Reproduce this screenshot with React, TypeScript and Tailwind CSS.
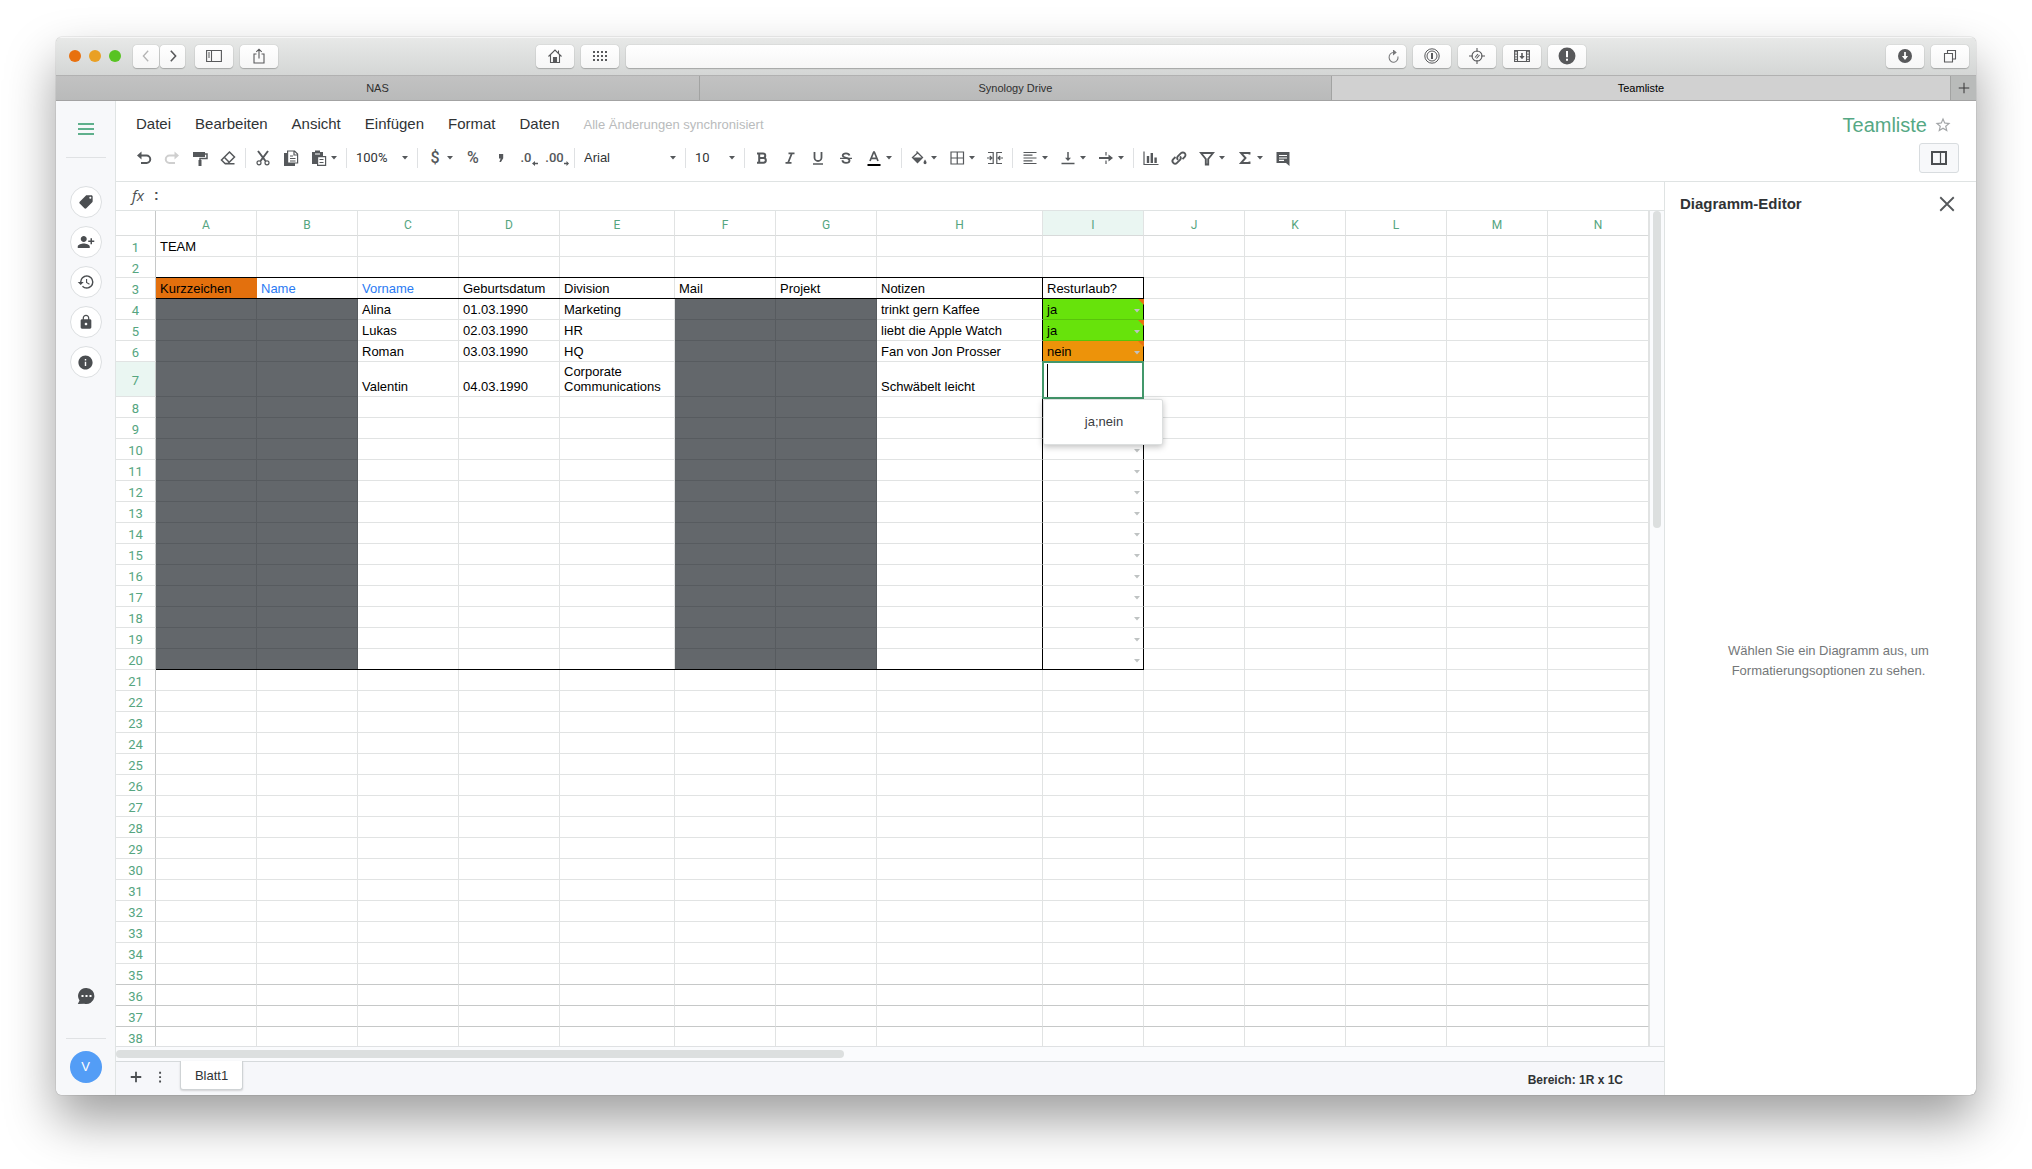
import { ReactNode } from 'react';
import clsx from 'clsx';
import { MdLocalOffer, MdPersonAdd, MdHistory, MdLock, MdInfo, MdStarBorder } from 'react-icons/md';

const columns = [
	{ name: 'A', width: 'w-[101px]' },
	{ name: 'B', width: 'w-[101px]' },
	{ name: 'C', width: 'w-[101px]' },
	{ name: 'D', width: 'w-[101px]' },
	{ name: 'E', width: 'w-[115px]' },
	{ name: 'F', width: 'w-[101px]' },
	{ name: 'G', width: 'w-[101px]' },
	{ name: 'H', width: 'w-[166px]' },
	{ name: 'I', width: 'w-[101px]' },
	{ name: 'J', width: 'w-[101px]' },
	{ name: 'K', width: 'w-[101px]' },
	{ name: 'L', width: 'w-[101px]' },
	{ name: 'M', width: 'w-[101px]' },
	{ name: 'N', width: 'w-[101px]' }
];

const rows = Array.from({ length: 38 }, (_, i) => i + 1);

const values: Record<string, string> = {
	A1: 'TEAM',
	A3: 'Kurzzeichen', B3: 'Name', C3: 'Vorname', D3: 'Geburtsdatum', E3: 'Division',
	F3: 'Mail', G3: 'Projekt', H3: 'Notizen', I3: 'Resturlaub?',
	C4: 'Alina', D4: '01.03.1990', E4: 'Marketing', H4: 'trinkt gern Kaffee', I4: 'ja',
	C5: 'Lukas', D5: '02.03.1990', E5: 'HR', H5: 'liebt die Apple Watch', I5: 'ja',
	C6: 'Roman', D6: '03.03.1990', E6: 'HQ', H6: 'Fan von Jon Prosser', I6: 'nein',
	C7: 'Valentin', D7: '04.03.1990', E7: 'Corporate Communications', H7: 'Schwäbelt leicht'
};

const menus = ['Datei', 'Bearbeiten', 'Ansicht', 'Einfügen', 'Format', 'Daten'];

const tabs = [
	{ name: 'NAS', grow: 'grow-[644]', active: false },
	{ name: 'Synology Drive', grow: 'grow-[632]', active: false },
	{ name: 'Teamliste', grow: 'grow-[619]', active: true }
];

function Icon({ children, size = 16, stroke = 1.5 }: { children: ReactNode; size?: number; stroke?: number }) {
	return (
		<svg width={size} height={size} viewBox="0 0 16 16" fill="none" stroke="currentColor" strokeWidth={stroke} aria-hidden="true" className="shrink-0">
			{children}
		</svg>
	);
}

function Caret() {
	return (
		<svg width="8" height="4" viewBox="0 0 8 4" fill="currentColor" aria-hidden="true" className="shrink-0">
			<path d="M1 0h6L4 3.6z" />
		</svg>
	);
}

function ChromeButton({ label, children }: { label: string; children: ReactNode }) {
	return (
		<button aria-label={label} className="flex h-[23px] w-[38px] shrink-0 items-center justify-center rounded-[4px] bg-linear-to-b from-white to-[#f6f6f6] text-[#58595b] shadow-[0_0_1px_rgba(0,0,0,0.35),0_1px_1px_rgba(0,0,0,0.2)]">
			{children}
		</button>
	);
}

function Tool({ label, children, disabled }: { label: string; children: ReactNode; disabled?: boolean }) {
	return (
		<button aria-label={label} disabled={disabled} className="flex h-7 w-7 shrink-0 items-center justify-center text-[#55585b] disabled:text-[#cfcfcf]">
			{children}
		</button>
	);
}

function MenuTool({ label, children }: { label: string; children: ReactNode }) {
	return (
		<button aria-label={label} className="flex h-7 w-[38px] shrink-0 items-center text-[#55585b]">
			<span className="-mr-[3px] flex w-7 shrink-0 justify-center">{children}</span>
			<Caret />
		</button>
	);
}

function Picker({ label, value, width }: { label: string; value: string; width: string }) {
	return (
		<div className={clsx('relative flex h-7 shrink-0 items-center text-[#55585b]', width)}>
			<select aria-label={label} className="h-full w-full appearance-none bg-transparent pl-1.5 text-[13px] text-[#303335]">
				<option>{value}</option>
			</select>
			<span className="pointer-events-none absolute right-[5px]"><Caret /></span>
		</div>
	);
}

function Separator() {
	return <span className="mx-[3px] h-5 w-px shrink-0 bg-[#dfe1e3]" />;
}

function TitleBar() {
	return (
		<div className="grid h-[39px] shrink-0 grid-cols-[1fr_minmax(0,780px)_1fr] items-center border-b border-[#b1b1b1] bg-linear-to-b from-[#e8e9e8] to-[#d4d6d5] shadow-[inset_0_1px_0_#f6f6f6]">
			<div className="flex items-center pr-[7px] pl-[13px]">
				<div className="flex gap-2">
					<span className="h-3 w-3 rounded-full bg-[#e8700e]" />
					<span className="h-3 w-3 rounded-full bg-[#e9a024]" />
					<span className="h-3 w-3 rounded-full bg-[#58c322]" />
				</div>
				<div className="ml-3 flex gap-px">
					<button aria-label="Zurück" className="flex h-[23px] w-[26px] items-center justify-center rounded-[4px] bg-linear-to-b from-white to-[#f6f6f6] text-[#b4b4b4] shadow-[0_0_1px_rgba(0,0,0,0.35),0_1px_1px_rgba(0,0,0,0.2)]">
						<Icon size={14}><path d="M10.5 2 5 8l5.500 6" /></Icon>
					</button>
					<button aria-label="Vorwärts" className="flex h-[23px] w-[25px] items-center justify-center rounded-[4px] bg-linear-to-b from-white to-[#f6f6f6] text-[#58595b] shadow-[0_0_1px_rgba(0,0,0,0.35),0_1px_1px_rgba(0,0,0,0.2)]">
						<Icon size={14} stroke={1.8}><path d="M5.500 2 11 8l-5.500 6" /></Icon>
					</button>
				</div>
				<div className="ml-[10px] flex gap-[7px]">
					<ChromeButton label="Seitenleiste">
						<Icon stroke={1.1}><path d="M.6 2.500h14.800v11H.6zM5.500 2.500v11M2 5h2M2 7h2M2 9h2" /></Icon>
					</ChromeButton>
					<ChromeButton label="Teilen">
						<Icon stroke={1.1}><path d="M5.500 6H3v9h10V6h-2.500M8 10.500V1.200M5.300 3.800 8 1.200l2.700 2.600" /></Icon>
					</ChromeButton>
				</div>
				<div className="ml-auto flex gap-[7px]">
					<ChromeButton label="Startseite">
						<Icon stroke={1.1}>
							<path d="M1.500 8.500 8 2l6.500 6.500M3.500 7v7.500h9V7M11.500 5V2.500" />
							<path d="M6.500 14V9.500h3V14z" fill="currentColor" />
						</Icon>
					</ChromeButton>
					<ChromeButton label="Favoriten">
						<Icon stroke={2}><path strokeDasharray="2 2" d="M1 4h14M1 8h14M1 12h14" /></Icon>
					</ChromeButton>
				</div>
			</div>
			<div className="flex h-[23px] items-center rounded-[4px] bg-linear-to-b from-white to-[#f6f6f6] pr-[6px] text-[#77787a] shadow-[0_0_1px_rgba(0,0,0,0.35),0_1px_1px_rgba(0,0,0,0.2)]">
				<input aria-label="Adresse" className="h-full min-w-0 flex-1 bg-transparent px-2 text-xs outline-none" />
				<Icon size={13} stroke={1.3}><path d="M13.500 8A5.500 6 0 1 1 8 3h1.500" /><path d="M8 .5 11 3 8 5.500z" fill="currentColor" /></Icon>
			</div>
			<div className="flex items-center gap-[7px] pr-[7px] pl-[7px]">
				<ChromeButton label="1Password">
					<Icon stroke={1}><circle cx="8" cy="8" r="7.200" /><circle cx="8" cy="8" r="5" /><path strokeWidth="2" d="M8 5v6" /></Icon>
				</ChromeButton>
				<ChromeButton label="Blocker">
					<Icon stroke={1.1}><circle cx="8" cy="8" r="5" /><path d="M8 0v4M8 12v4M0 8h4M12 8h4M6 9.500l3-3.500M7.500 10.500l3-3.500" /></Icon>
				</ChromeButton>
				<ChromeButton label="Video laden">
					<Icon stroke={1.1}><path d="M.6 2.500h14.800v11H.6zM3.500 2.500v11M12.500 2.500v11" /><path strokeWidth="1.600" d="M8 5v4" /><path fill="currentColor" stroke="none" d="M5.300 8h5.400L8 11.200z" /><path strokeWidth="1.600" strokeDasharray="1.200 1.400" d="M2 3v10M14 3v10" /></Icon>
				</ChromeButton>
				<ChromeButton label="Hinweis">
					<Icon size={18}><circle cx="8" cy="8" r="7.500" fill="currentColor" stroke="none" /><path stroke="#fff" strokeWidth="1.800" d="M8 3.500v5.500M8 10.500v1.800" /></Icon>
				</ChromeButton>
				<div className="ml-auto flex gap-[7px]">
					<ChromeButton label="Downloads">
						<Icon size={14}><circle cx="8" cy="8" r="8" fill="currentColor" stroke="none" /><path stroke="#fff" strokeWidth="2" d="M8 3.500v7" /><path fill="#fff" stroke="none" d="M4.500 8h7L8 12.500z" /></Icon>
					</ChromeButton>
					<ChromeButton label="Alle Tabs">
						<Icon stroke={1.1}><path d="M2.500 5.500h8v8.500h-8zM5.500 5.500v-3h8V11h-3" /></Icon>
					</ChromeButton>
				</div>
			</div>
		</div>
	);
}

function TabBar() {
	return (
		<div className="flex h-[25px] shrink-0 border-b border-[#a3a3a3] text-[11px]">
			{tabs.map((tab) => (
				<button
					key={tab.name}
					className={clsx(
						'basis-0 border-r border-[#a2a3a2]',
						tab.grow,
						tab.active ? 'bg-[#d1d1d1] text-black' : 'bg-linear-to-b from-[#c2c2c2] to-[#b9baba] text-[#2f2f2f]'
					)}
				>
					{tab.name}
				</button>
			))}
			<button aria-label="Neuer Tab" className="flex w-[25px] items-center justify-center bg-[#b9bbba] text-[#3b3b3b]">
				<Icon size={12} stroke={1.4}><path d="M8 1v14M1 8h14" /></Icon>
			</button>
		</div>
	);
}

function Sidebar() {
	const items = [
		{ label: 'Etiketten', icon: <MdLocalOffer size={16} className="-scale-x-100" /> },
		{ label: 'Freigeben', icon: <MdPersonAdd size={18} className="-scale-x-100" /> },
		{ label: 'Versionen', icon: <MdHistory size={18} /> },
		{ label: 'Schützen', icon: <MdLock size={16} /> },
		{ label: 'Info', icon: <MdInfo size={17} /> }
	];

	return (
		<nav className="flex w-[60px] shrink-0 flex-col items-center border-r border-[#e0e4e4] bg-[#f7f8fa] pb-3 text-[#4b4e51]">
			<button aria-label="Menü" className="mt-[18px] flex h-5 w-5 items-center justify-center text-[#5fb08c]">
				<Icon stroke={2}><path d="M0 3h16M0 8h16M0 13h16" /></Icon>
			</button>
			<div className="mt-[18px] h-px w-10 bg-[#e0e2e4]" />
			<div className="mt-7 flex flex-col gap-2">
				{items.map((item) => (
					<button key={item.label} aria-label={item.label} className="flex h-8 w-8 items-center justify-center rounded-full border border-[#dcdfe1] bg-white">
						{item.icon}
					</button>
				))}
			</div>
			<button aria-label="Chat" className="mt-auto flex h-5 w-5 items-center justify-center">
				<svg width="18" height="18" viewBox="0 0 18 18" aria-hidden="true">
					<path fill="currentColor" d="M9.500 1a8 8 0 1 1-2.300 15.700L.8 17l1.700-3.500A8 8 0 0 1 9.500 1z" />
					<path fill="#fff" d="M4.500 8h2v2h-2zM8.500 8h2v2h-2zM12.500 8h2v2h-2z" />
				</svg>
			</button>
			<div className="mt-8 h-px w-10 bg-[#e0e2e4]" />
			<button aria-label="Konto" className="mt-3 h-8 w-8 rounded-full bg-[#539df6] text-[13px] text-white">V</button>
		</nav>
	);
}

function Toolbar() {
	return (
		<div className="flex h-8 items-center">
			<Tool label="Rückgängig"><Icon stroke={2}><path d="M3 5.500h7.500a3.500 3.500 0 0 1 0 7.500H5" /><path stroke="none" fill="currentColor" d="M1 5.500 5.500 1.500v8z" /></Icon></Tool>
			<Tool label="Wiederholen" disabled><Icon stroke={2}><path d="M13 5.500H5.500a3.500 3.500 0 0 0 0 7.500H11" /><path stroke="none" fill="currentColor" d="M15 5.500 10.500 1.500v8z" /></Icon></Tool>
			<Tool label="Format übertragen"><Icon><path fill="currentColor" stroke="none" d="M1 2h12v5H1zM6.500 10h3v6h-3z" /><path d="M12 4h3v4.500H8V11" /></Icon></Tool>
			<Tool label="Format löschen"><Icon><path d="M9.500 2 1.500 10l3.500 3.500h3L14.500 7zM5 13.800h9.500" /><path d="M4.500 7.500 9 12" /></Icon></Tool>
			<Separator />
			<Tool label="Ausschneiden"><Icon><path strokeWidth="2" d="M3 1l7.500 10M13 1 5.500 11" /><circle cx="4" cy="12.800" r="2" strokeWidth="1.200" /><circle cx="12" cy="12.800" r="2" strokeWidth="1.200" /></Icon></Tool>
			<Tool label="Kopieren"><Icon stroke={1.2}><path fill="currentColor" stroke="none" d="M1 3h3.500v10H12v3H1z" /><path d="M4.600 1h7l3 3v9h-10zM11 1v4h3.500M7 6h3M7 8.500h5.500M7 11h5.500" /></Icon></Tool>
			<MenuTool label="Einfügen"><Icon stroke={1.2}><path fill="currentColor" stroke="none" d="M1 2h3V.5h5V2h3v4H6v8H1z" /><path d="M6.600 6.600h8v8.800h-8zM8.500 9.500h4M8.500 12.500h4" /><path stroke="#fff" d="M4 4h5" /></Icon></MenuTool>
			<Separator />
			<Picker label="Zoom" value="100%" width="w-16 font-[Roboto]" />
			<Separator />
			<MenuTool label="Währung"><span className="font-[Roboto] text-base font-medium">$</span></MenuTool>
			<Tool label="Prozent"><span className="font-[Roboto] text-base font-medium">%</span></Tool>
			<Tool label="Tausendertrennzeichen"><Icon><path fill="currentColor" stroke="none" d="M6 4h4.200v4.200L8 12H6.400l1.200-3.500H6z" /></Icon></Tool>
			<Tool label="Weniger Dezimalstellen">
				<span className="flex items-end font-[Roboto] text-[13px] leading-4 font-medium">.0<svg width="6" height="5" viewBox="0 0 6 5" aria-hidden="true"><path fill="currentColor" d="M0 2.500 3 0v1.700h3v1.600H3V5z" /></svg></span>
			</Tool>
			<Tool label="Mehr Dezimalstellen">
				<span className="flex items-end font-[Roboto] text-[13px] leading-4 font-medium">.00<svg width="5" height="5" viewBox="0 0 5 5" aria-hidden="true"><path fill="currentColor" d="M5 2.500 2.500 0v1.700H0v1.600h2.500V5z" /></svg></span>
			</Tool>
			<Separator />
			<Picker label="Schriftart" value="Arial" width="w-[104px]" />
			<Separator />
			<Picker label="Schriftgröße" value="10" width="w-[52px] font-[Roboto]" />
			<Separator />
			<Tool label="Fett"><Icon stroke={2}><path d="M4.500 3.500H9a2.200 2.200 0 0 1 0 4.500H4.500M4.500 8H9.500a2.300 2.300 0 0 1 0 4.700H4.500M5.200 3v10M3 3.500h2M3 12.700h2" /></Icon></Tool>
			<Tool label="Kursiv"><Icon stroke={1.8}><path d="M6.500 3.300h6M3.500 12.800h6M9.800 3.500 6.200 12.500" /></Icon></Tool>
			<Tool label="Unterstrichen"><Icon stroke={1.8}><path d="M4.500 2v5.500a3.500 3.500 0 0 0 7 0V2" /><path strokeWidth="1.400" d="M3 14h10" /></Icon></Tool>
			<Tool label="Durchgestrichen"><Icon stroke={1.8}><path d="M11.500 5.500C11 3.800 9.800 3.300 8 3.300c-2 0-3.300.9-3.300 2.300 0 3 6.800 1.500 6.800 4.800 0 1.500-1.500 2.400-3.500 2.400s-3.300-.9-3.700-2.600" /><path strokeWidth="1.200" d="M2 8.300h12" /></Icon></Tool>
			<MenuTool label="Textfarbe"><Icon stroke={1.7}><path d="M4 11 7.700 2h.6L12 11M5.300 8.300h5.400" /><path stroke="#000" strokeWidth="2" d="M1.500 15h13" /></Icon></MenuTool>
			<Separator />
			<MenuTool label="Füllfarbe"><Icon stroke={1.3}><path d="M5.500 1.500 11.500 7.500 6.500 12.500 1.500 7.500 6.500 3" /><path fill="currentColor" stroke="none" d="M1.500 7.500h10l-5 5.300zM14 9.500s1.600 2 1.600 3.100a1.500 1.500 0 0 1-3.100 0c0-1.100 1.500-3.100 1.500-3.100z" /></Icon></MenuTool>
			<MenuTool label="Rahmen"><Icon stroke={1.2}><path d="M2 2h12.500v12H2zM8.250 2v12M2 8h12.500" /></Icon></MenuTool>
			<Tool label="Zellen verbinden"><Icon stroke={1.2}><path d="M1 2.500h5.200v11H1M15 2.500H9.800v11H15M0 8h4.500M16 8h-4.500M2.800 6l2 2-2 2M13.200 6l-2 2 2 2" /></Icon></Tool>
			<Separator />
			<MenuTool label="Ausrichtung"><Icon stroke={1.2}><path d="M1.500 2.500h13M1.500 5.200h9M1.500 8h13M1.500 10.800h9M1.500 13.500h13" /></Icon></MenuTool>
			<MenuTool label="Vertikale Ausrichtung"><Icon><path d="M8 2v8M1.500 13.500h13" /><path fill="currentColor" stroke="none" d="M5 7.800h6L8 11z" /></Icon></MenuTool>
			<MenuTool label="Textumbruch"><Icon stroke={1.2}><path d="M8 2v3.500M8 10.500V14" /><path strokeWidth="2" d="M1 8h10" /><path fill="currentColor" stroke="none" d="M10.500 4.500 15 8l-4.500 3.500z" /></Icon></MenuTool>
			<Separator />
			<Tool label="Diagramm"><Icon><path strokeWidth="1.200" d="M1 1.500v13h14.500" /><path strokeWidth="2.400" d="M5 6v7M8.800 3v10M12.600 7.500V13" /></Icon></Tool>
			<Tool label="Link"><Icon stroke={1.9}><path d="M7 9.800a2.600 2.600 0 0 1 0-3.600l3-3a2.600 2.600 0 0 1 3.700 3.700l-2.200 2.200M9 6.300a2.600 2.600 0 0 1 0 3.600l-3 3a2.600 2.600 0 0 1-3.700-3.700l2.200-2.200" /></Icon></Tool>
			<MenuTool label="Filter"><Icon stroke={1.9}><path d="M2 3h12L9.200 9v5.500H6.800V9z" /></Icon></MenuTool>
			<MenuTool label="Summe"><Icon stroke={1.9}><path d="M12.500 4.500V3H4l4.500 5L4 13h8.500v-1.500" /></Icon></MenuTool>
			<Tool label="Kommentar"><Icon><path fill="currentColor" stroke="none" d="M1.500 2h13v14L11 13H1.500z" /><path stroke="#fff" strokeWidth="1.200" d="M4 5.500h8M4 8h8M4 10.400h5" /></Icon></Tool>
			<button aria-label="Seitenbereich" className="ml-auto flex h-[30px] w-10 shrink-0 items-center justify-center rounded-[3px] border border-[#d8dcdf] bg-[#f7f8fa] text-[#4b4e51]">
				<Icon stroke={2}><path d="M1 2h14v12H1z" /><path strokeWidth="1.200" d="M9.500 2v12" /></Icon>
			</button>
		</div>
	);
}

function isRedacted(col: string, row: number) {
	return 'ABFG'.includes(col) && row >= 4 && row <= 20;
}

// black rules under rows 2, 3 and 20 run unbroken across the column lines
function hasRule(col: string, row: number) {
	return col <= 'I' && (row === 2 || row === 3 || row === 20);
}

function cellColors(col: string, row: number) {
	if (col === 'A' && row === 3) return 'bg-[#e3700d] border-r-[#e3700d] border-b-black';
	if (isRedacted(col, row)) return 'bg-[#63676b] border-r-[#575b5f] border-b-[#575b5f]';
	if (col === 'I' && (row === 4 || row === 5)) return 'bg-[#67e30b] border-r-black border-b-[#58c40a]';
	if (col === 'I' && row === 6) return 'bg-[#ed930a] border-r-black border-b-black';

	const boxed = (col === 'H' || col === 'I') && row >= 3 && row <= 20;
	return clsx(
		boxed ? 'border-r-black' : 'border-r-[#e1e3e3]',
		row >= 35 ? 'border-b-[#c6c8c8]' : 'border-b-[#e1e3e3]'
	);
}

function Cell({ col, row }: { col: string; row: number }) {
	const isLink = row === 3 && (col === 'B' || col === 'C');
	const hasChoice = col === 'I' && row >= 4 && row <= 20 && row !== 7;

	return (
		<td
			className={clsx(
				'relative border-r border-b p-0 pb-[2px] pl-1 align-bottom leading-[15px]',
				row === 7 ? 'h-[35px]' : 'h-[21px]',
				col === 'E' ? 'whitespace-normal' : 'whitespace-nowrap',
				isLink ? 'text-[#2b7bf3]' : 'text-black',
				hasRule(col, row) && 'after:absolute after:-right-px after:-bottom-px after:left-0 after:h-px after:bg-black',
				cellColors(col, row)
			)}
		>
			{values[col + row]}
			{hasChoice && (
				<span className="absolute right-[2px] bottom-[6px] text-[#bfc3c3]"><Caret /></span>
			)}
			{hasChoice && row <= 6 && (
				<svg width="6" height="6" viewBox="0 0 6 6" aria-hidden="true" className="absolute top-0 -right-px">
					<path fill="#e8700e" d="M0 0h6v6z" />
				</svg>
			)}
			{col === 'I' && row === 7 && (
				<>
					<input aria-label="Zelle I7" className="absolute -top-px -right-px -bottom-[3px] -left-px z-10 border-2 border-[#43986b] bg-white px-1 outline-none" />
					<span className="absolute top-[2px] -bottom-px left-1 z-10 w-px bg-black" />
					<div className="absolute top-[37px] left-0 z-20 flex h-[46px] w-[120px] items-center justify-center rounded-[2px] border border-[#dcdfdf] bg-white pb-0.5 pl-0.5 text-[#3a3d3f] shadow-[0_2px_6px_rgba(0,0,0,0.25)]">
						ja;nein
					</div>
				</>
			)}
		</td>
	);
}

function Sheet() {
	return (
		<div className="flex min-h-0 flex-1">
			<div className="min-w-0 flex-1 overflow-hidden">
				<table className="w-full table-fixed border-separate border-spacing-0 text-[13px]">
					<colgroup>
						<col className="w-10" />
						{columns.map((column) => <col key={column.name} className={column.width} />)}
					</colgroup>
					<thead>
						<tr className="h-[25px] font-[Roboto] text-[#55a580]">
							<td className="border-r border-b border-r-[#c6c8c8] border-b-[#dcdede] p-0" />
							{columns.map((column) => (
								<th
									key={column.name}
									scope="col"
									className={clsx('border-r border-b border-r-[#e1e3e3] border-b-[#d8dada] p-0 pt-1 text-xs font-normal', column.name === 'I' && 'bg-[#eaf6f2]')}
								>
									{column.name}
								</th>
							))}
						</tr>
					</thead>
					<tbody>
						{rows.map((row) => (
							<tr key={row}>
								<th
									scope="row"
									className={clsx(
										'border-r border-b border-r-[#c6c8c8] p-0 pt-[3px] font-[Roboto] leading-[15px] font-normal text-[#55a580]',
										row >= 35 ? 'border-b-[#c6c8c8]' : 'border-b-[#e1e3e3]',
										row === 7 && 'bg-[#eaf6f2]'
									)}
								>
									{row}
								</th>
								{columns.map((column) => <Cell key={column.name} col={column.name} row={row} />)}
							</tr>
						))}
					</tbody>
				</table>
			</div>
			<div className="w-[15px] shrink-0 border-l border-[#e1e3e3] bg-[#fafbfd] pl-[3px]">
				<div className="h-[317px] w-2 rounded-full bg-[#dcdfdf]" />
			</div>
		</div>
	);
}

function SheetFooter() {
	return (
		<>
			<div className="h-[15px] shrink-0 border-t border-[#dfe1e3] bg-[#fafbfd] pt-[3px]">
				<div className="h-2 w-[47%] rounded-full bg-[#dcdfdf]" />
			</div>
			<div className="flex h-[34px] shrink-0 items-start border-t border-[#d6dadc] bg-[#f6f7fa] pl-2 text-[#4b4e51]">
				<button aria-label="Blatt hinzufügen" className="flex h-[30px] w-6 items-center justify-center">
					<Icon size={12} stroke={2.4}><path d="M8 1v14M1 8h14" /></Icon>
				</button>
				<button aria-label="Alle Blätter" className="flex h-[30px] w-6 items-center justify-center">
					<Icon size={14}><path fill="currentColor" stroke="none" d="M7 2h2.200v2.200H7zM7 7h2.200v2.200H7zM7 12h2.200v2.200H7z" /></Icon>
				</button>
				<button className="-mt-px ml-2 h-[29px] w-[63px] rounded-b-[3px] border border-t-0 border-[#cfd3d5] bg-white pt-0.5 text-[13px] text-[#303335] shadow-[0_1px_2px_rgba(0,0,0,0.15)]">
					Blatt1
				</button>
				<span className="mr-[41px] ml-auto self-center pt-0.5 text-xs font-bold text-[#303335]">Bereich: 1R x 1C</span>
			</div>
		</>
	);
}

function ChartPanel() {
	return (
		<aside className="flex w-[312px] shrink-0 flex-col border-l border-[#dfe3e3]">
			<div className="flex h-11 items-center justify-between pr-[20px] pl-[15px]">
				<h2 className="text-[15px] font-bold text-[#303335]">Diagramm-Editor</h2>
				<button aria-label="Schließen" className="text-[#55585b]">
					<Icon size={18} stroke={1.6}><path d="M2 2l12 12M14 2 2 14" /></Icon>
				</button>
			</div>
			<p className="flex flex-1 items-center justify-center pr-10 pl-14 text-center text-[13px] leading-5 text-[#747779]">
				Wählen Sie ein Diagramm aus, um Formatierungsoptionen zu sehen.
			</p>
		</aside>
	);
}

export default function App() {
	return (
		<div className="h-screen bg-white px-14 pt-[37px] pb-[74px] font-['Liberation_Sans',Arial,sans-serif]">
			<div className="flex h-full flex-col overflow-hidden rounded-[6px] bg-white shadow-[0_0_1px_rgba(0,0,0,0.6),0_25px_50px_rgba(0,0,0,0.38)]">
				<TitleBar />
				<TabBar />
				<div className="flex min-h-0 flex-1">
					<Sidebar />
					<main className="flex min-w-0 flex-1 flex-col">
						<header className="shrink-0 border-b border-[#dfe3e3] pt-[7px] pr-[17px] pb-[7px] pl-[14px]">
							<div className="mb-px flex h-[33px] items-center">
								<div className="flex gap-6 pl-1.5 text-[15px] text-[#303335]">
									{menus.map((menu) => <button key={menu}>{menu}</button>)}
								</div>
								<span className="ml-6 text-[13px] text-[#b9bbbc]">Alle Änderungen synchronisiert</span>
								<h1 className="ml-auto text-xl text-[#55a884]">Teamliste</h1>
								<button aria-label="Favorit" className="mr-[7px] ml-[7px] text-[#a3a6a8]"><MdStarBorder size={18} /></button>
							</div>
							<Toolbar />
						</header>
						<div className="flex min-h-0 flex-1">
							<div className="flex min-w-0 flex-1 flex-col">
								<div className="flex h-[29px] shrink-0 items-center border-b border-[#dfe3e3] pl-4 text-[#4b4e51]">
									<label htmlFor="formula" className="w-[22px] pb-0.5 font-['Open_Sans'] text-[15px] italic">fx</label>
									<span className="pb-0.5 text-sm font-bold">:</span>
									<input id="formula" className="h-full min-w-0 flex-1 px-2 text-[13px] outline-none" />
								</div>
								<Sheet />
								<SheetFooter />
							</div>
							<ChartPanel />
						</div>
					</main>
				</div>
			</div>
		</div>
	);
}
